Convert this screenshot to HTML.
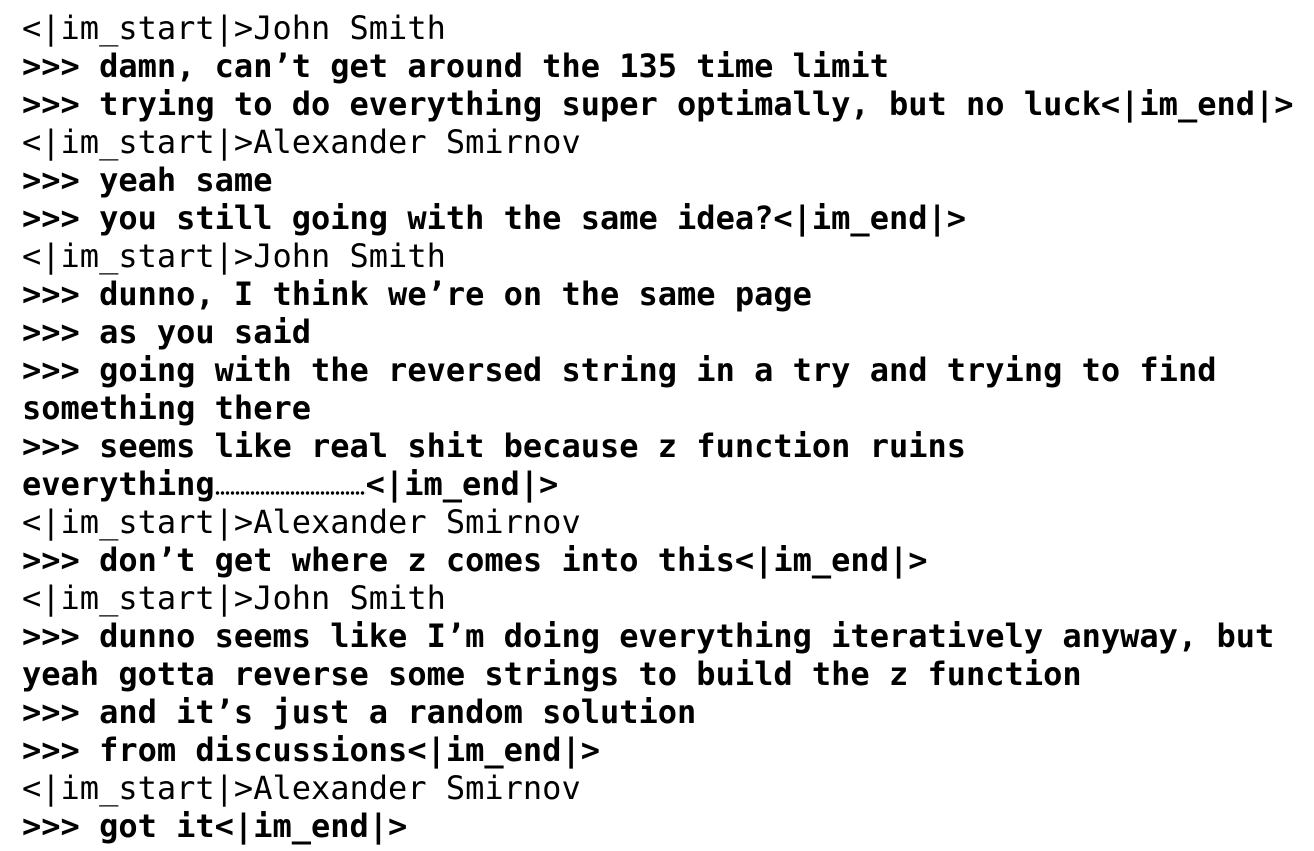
<!DOCTYPE html>
<html><head><meta charset="utf-8"><style>
html,body{margin:0;padding:0;background:#fff;width:1314px;height:851px;overflow:hidden}
pre{margin:0;padding:9px 0 0 22px;font-family:"DejaVu Sans Mono","Liberation Mono",monospace;font-size:32px;line-height:38px;color:#000;white-space:pre}
b{font-weight:bold}
.d{display:inline-block;width:151px;height:4px;vertical-align:baseline;background-image:radial-gradient(circle,#000 1.6px,transparent 1.9px);background-size:5px 4px;background-repeat:repeat-x}
</style></head><body><pre>&lt;|im_start|&gt;John Smith
<b>&gt;&gt;&gt; damn, can’t get around the 135 time limit</b>
<b>&gt;&gt;&gt; trying to do everything super optimally, but no luck&lt;|im_end|&gt;</b>
&lt;|im_start|&gt;Alexander Smirnov
<b>&gt;&gt;&gt; yeah same</b>
<b>&gt;&gt;&gt; you still going with the same idea?&lt;|im_end|&gt;</b>
&lt;|im_start|&gt;John Smith
<b>&gt;&gt;&gt; dunno, I think we’re on the same page</b>
<b>&gt;&gt;&gt; as you said</b>
<b>&gt;&gt;&gt; going with the reversed string in a try and trying to find</b>
<b>something there</b>
<b>&gt;&gt;&gt; seems like real shit because z function ruins</b>
<b>everything<span class="d"></span>&lt;|im_end|&gt;</b>
&lt;|im_start|&gt;Alexander Smirnov
<b>&gt;&gt;&gt; don’t get where z comes into this&lt;|im_end|&gt;</b>
&lt;|im_start|&gt;John Smith
<b>&gt;&gt;&gt; dunno seems like I’m doing everything iteratively anyway, but</b>
<b>yeah gotta reverse some strings to build the z function</b>
<b>&gt;&gt;&gt; and it’s just a random solution</b>
<b>&gt;&gt;&gt; from discussions&lt;|im_end|&gt;</b>
&lt;|im_start|&gt;Alexander Smirnov
<b>&gt;&gt;&gt; got it&lt;|im_end|&gt;</b></pre></body></html>
